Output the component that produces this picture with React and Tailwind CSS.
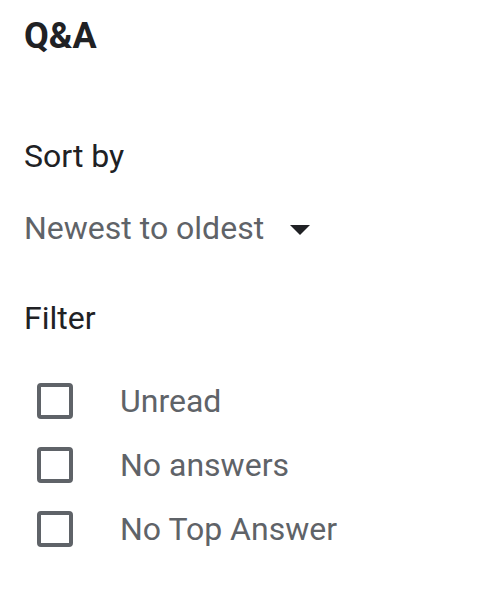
import React from 'react';

const filters = ['Unread', 'No answers', 'No Top Answer'];

// Пустой чекбокс в стиле Material
const Checkbox = () => (
  <div className="w-[36px] h-[36px] shrink-0 border-4 border-[#5f6368] rounded-[4px] ml-[13px]" />
);

const App = () => {
  return (
    <div
      className="min-h-screen bg-white px-6 pt-[18px]"
      style={{ fontFamily: 'Roboto, "Noto Sans", sans-serif' }}
    >
      {/* Заголовок */}
      <h1 className="text-[36px] leading-[36px] font-bold text-[#202124]">Q&amp;A</h1>

      {/* Сортировка */}
      <div className="mt-[82px] text-[32px] leading-[40px] text-[#202124]">Sort by</div>
      <button className="mt-[32px] flex items-center text-[32px] leading-[40px] text-[#5f6368]">
        <span>Newest to oldest</span>
        <svg width="20" height="10" viewBox="0 0 20 10" className="ml-[26px] mt-1">
          <polygon points="0,0 20,0 10,10" fill="#202124" />
        </svg>
      </button>

      {/* Фильтры */}
      <div className="mt-[50px] text-[32px] leading-[40px] text-[#202124]">Filter</div>
      <div className="mt-[31px] flex flex-col">
        {filters.map((f) => (
          <label key={f} className="h-16 flex items-center">
            <Checkbox />
            <span className="ml-[47px] text-[32px] leading-[40px] text-[#5f6368]">{f}</span>
          </label>
        ))}
      </div>
    </div>
  );
};

export default App;
